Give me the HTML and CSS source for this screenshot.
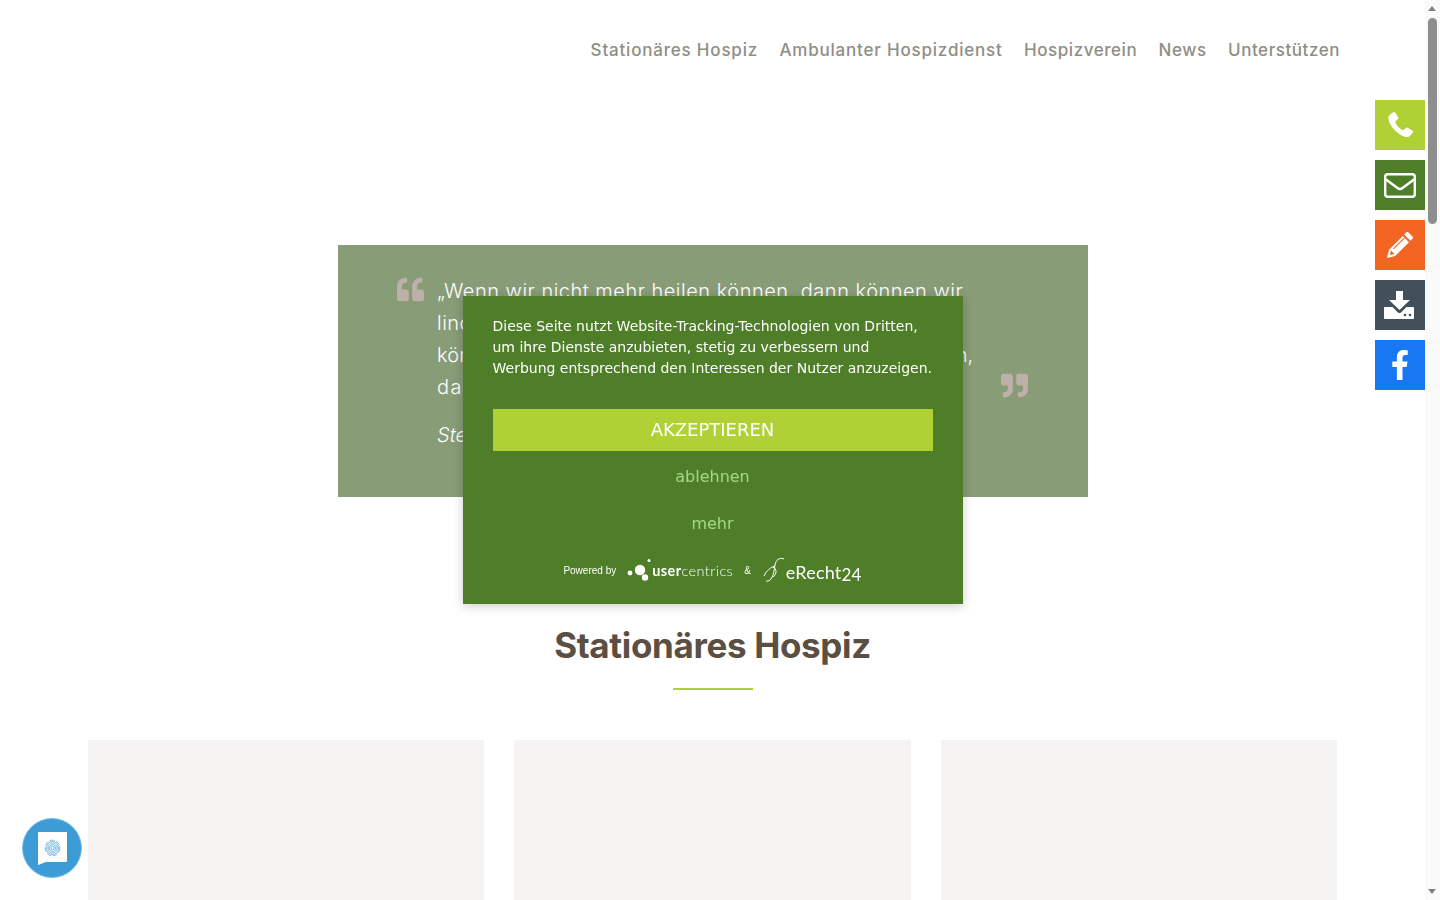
FILE: index.html
```html
<!DOCTYPE html>
<html lang="de">
<head>
    <meta charset="UTF-8">
    <meta name="viewport" content="width=device-width, initial-scale=1.0">
    <title>Hospiz</title>
    <link rel="stylesheet" href="styles.css">
</head>
<body>
    <div class="page">
        <header class="top">
            <nav class="menu">
                <a class="menu-wide" href="#">Stationäres Hospiz</a>
                <a class="menu-wide" href="#">Ambulanter Hospizdienst</a>
                <a href="#">Hospizverein</a>
                <a href="#">News</a>
                <a href="#">Unterstützen</a>
            </nav>
        </header>

        <section class="quote">
            <svg class="mark" viewBox="0 0 512 512"><path d="M464 256h-80v-64c0-35.3 28.7-64 64-64h8c13.3 0 24-10.7 24-24V56c0-13.3-10.7-24-24-24h-8c-88.4 0-160 71.6-160 160v240c0 26.5 21.5 48 48 48h128c26.5 0 48-21.5 48-48V304c0-26.5-21.5-48-48-48zm-288 0H96v-64c0-35.3 28.7-64 64-64h8c13.3 0 24-10.7 24-24V56c0-13.3-10.7-24-24-24h-8C71.6 32 0 103.6 0 192v240c0 26.5 21.5 48 48 48h128c26.5 0 48-21.5 48-48V304c0-26.5-21.5-48-48-48z"/></svg>
            <div class="quote-body">
                <p class="quote-text">„Wenn wir nicht mehr heilen können, dann können wir<br>lindern. Wenn wir nicht mehr lindern können, dann<br><span class="line-tight">können wir trösten. Wenn wir nicht mehr trösten können,</span><br><span class="line-wide">dann können wir da sein.“</span></p>
                <p class="quote-author">Ste</p>
            </div>
            <svg class="mark mark-end" viewBox="0 0 512 512"><path d="M464 32H336c-26.5 0-48 21.500-48 48v128c0 26.500 21.500 48 48 48h80v64c0 35.300-28.700 64-64 64h-8c-13.300 0-24 10.700-24 24v48c0 13.300 10.700 24 24 24h8c88.400 0 160-71.600 160-160V80c0-26.500-21.500-48-48-48zm-288 0H48C21.500 32 0 53.500 0 80v128c0 26.500 21.500 48 48 48h80v64c0 35.300-28.700 64-64 64h-8c-13.300 0-24 10.700-24 24v48c0 13.300 10.700 24 24 24h8c88.400 0 160-71.600 160-160V80c0-26.500-21.500-48-48-48z"/></svg>
        </section>

        <section class="offer">
            <h2 class="offer-title">Stationäres Hospiz</h2>
            <div class="offer-line"></div>
            <div class="cards">
                <div class="card"></div>
                <div class="card"></div>
                <div class="card"></div>
            </div>
        </section>
    </div>

    <aside class="side">
        <a class="side-btn lime" href="#">
            <svg class="phone" viewBox="2.300 1.100 19.900 20.200" width="25" height="25"><path fill="#fff" d="M6.600 1.300c.5-.3 1.100-.2 1.400.3l2.300 3.900c.3.500.2 1-.2 1.400L8.500 8.400c-.4.400-.5.900-.3 1.400.9 2 3 4.600 5.400 5.900.5.300 1 .2 1.400-.2l1.500-1.500c.4-.4 1-.5 1.500-.2l3.700 2.300c.5.300.7.900.4 1.400-.7 1.500-2 3.300-3.700 3.800-1.300.4-3.400-.1-5.800-1.600C8.300 17.400 4.800 13 3.400 9.800 2.500 7.700 2.300 6 2.700 4.800c.5-1.500 2.500-3 3.900-3.500z"/></svg>
        </a>
        <a class="side-btn green" href="#">
            <svg viewBox="0 0 32 25" width="32" height="25"><rect x="1.200" y="1.200" width="29.600" height="22.600" rx="2.500" fill="none" stroke="#fff" stroke-width="2.400"/><path d="M2 6.500l11.500 8.500c1.500 1.100 3.500 1.100 5 0L30 6.500" fill="none" stroke="#fff" stroke-width="2.400"/></svg>
        </a>
        <a class="side-btn orange" href="#">
            <svg viewBox="0 0 28 28" width="28" height="28"><path fill="#fff" d="M20.500 1.300c.5-.5 1.300-.5 1.800 0l4.400 4.400c.5.500.5 1.300 0 1.800l-2.300 2.300-6.200-6.200zM16.800 5l6.200 6.200L9.200 25 1 27l2-8.200z"/><path fill="#f26522" d="M5 19.500l3.500 3.500-3.800 1-.7-.7zM7 17.500L18 6.500l.8.800L7.800 18.300z"/></svg>
        </a>
        <a class="side-btn slate" href="#">
            <svg class="tray" viewBox="0 0 30 28" width="30" height="28"><path fill="#fff" d="M12 0h7v9h7L15.500 19 5 9h7z"/><path fill="#fff" d="M0 17c0-.6.400-1 1-1h7.500l5.500 5.500c.8.800 2.200.8 3 0L22.500 16H29c.6 0 1 .4 1 1v10c0 .6-.4 1-1 1H1c-.6 0-1-.4-1-1z"/><circle cx="21" cy="24" r="1.300" fill="#434f59"/><circle cx="26" cy="24" r="1.300" fill="#434f59"/></svg>
        </a>
        <a class="side-btn fb" href="#">
            <svg viewBox="0 0 320 512" width="18" height="30" preserveAspectRatio="none"><path fill="#fff" d="M279.140 288l14.220-92.660h-88.910v-60.130c0-25.350 12.420-50.060 52.240-50.060h40.420V6.260S260.430 0 225.360 0c-73.220 0-121.080 44.380-121.080 124.720v70.620H22.890V288h81.390v224h100.170V288z"/></svg>
        </a>
    </aside>

    <div class="consent">
        <p class="consent-text">Diese Seite nutzt Website-Tracking-Technologien von Dritten, um ihre Dienste anzubieten, stetig zu verbessern und Werbung entsprechend den Interessen der Nutzer anzuzeigen.</p>
        <button class="accept">AKZEPTIEREN</button>
        <a class="consent-link" href="#">ablehnen</a>
        <a class="consent-link" href="#">mehr</a>
        <div class="powered">
            <span class="powered-by">Powered by</span>
            <span class="uc">
                <svg viewBox="0 0 24 24" width="24" height="24"><circle cx="3" cy="15" r="2.400" fill="#fff"/><circle cx="13" cy="12" r="5.200" fill="#fff"/><circle cx="22" cy="2.500" r="1.500" fill="#fff"/><circle cx="18" cy="19.500" r="3.200" fill="#fff"/></svg>
                <span class="uc-name"><b>user</b>centrics</span>
            </span>
            <span class="powered-by">&amp;</span>
            <span class="er">
                <svg viewBox="0 0 24 26" width="24" height="26"><path d="M22 2c-5-2-8 1-9 6-1 5-1 10-4 14-1 1.500-3 2.500-5 2M13 9c-4 1-9 5-11 10M11 10c4 2 4 7 0 10" fill="none" stroke="#fff" stroke-width="1"/></svg>
                <span class="er-name">eRecht<small>24</small></span>
            </span>
        </div>
    </div>

    <a class="chat" href="#">
        <svg viewBox="0 0 29 33" width="29" height="33"><path fill="#fff" d="M1 0h27c.6 0 1 .4 1 1v28c0 .6-.4 1-1 1H8l-8 3V1c0-.6.400-1 1-1z"/><g fill="none" stroke="#5aaade" stroke-width=".8"><ellipse cx="14.500" cy="16" rx="1.500" ry="2"/><ellipse cx="14.500" cy="16" rx="3" ry="3.500"/><ellipse cx="14.500" cy="16" rx="4.500" ry="5"/><ellipse cx="14.500" cy="16" rx="6" ry="6.500"/><ellipse cx="14.500" cy="16" rx="7.300" ry="7.800" stroke-dasharray="5 1.500"/></g></svg>
    </a>

    <div class="scrollbar">
        <span class="arrow arrow-up"></span>
        <span class="thumb"></span>
        <span class="arrow arrow-down"></span>
    </div>
</body>
</html>
```

FILE: styles.css
```css
html, body {
    margin: 0;
    height: 100%;
    overflow: hidden;
    background-color: #fff;
}
.page {
    width: 1425px;
    font-family: "Inter", "Liberation Sans", sans-serif;
}
a {
    text-decoration: none;
}
p {
    margin: 0;
}

/* top menu */
.top {
    height: 100px;
    padding-right: 85px;
    display: flex;
    justify-content: flex-end;
    box-sizing: border-box;
}
.menu {
    display: flex;
    gap: 21.4px;
    padding-top: 39px;
    font-size: 17px;
    line-height: 22px;
    font-weight: 500;
    letter-spacing: 0.55px;
}
.menu a {
    color: #8e8e86;
}
.menu .menu-wide {
    letter-spacing: 0.8px;
}

/* quote */
.quote {
    width: 750px;
    height: 252px;
    box-sizing: border-box;
    margin: 145px 0 0 338px;
    padding: 30px 60px 0 59px;
    display: flex;
    background-color: #889c77;
    color: #fff;
}
.mark {
    width: 27px;
    height: 27px;
    margin-top: 1px;
    fill: #bdb0a8;
    flex: none;
}
.mark-end {
    margin-top: 97px;
    margin-left: auto;
}
.quote-body {
    margin-left: 13px;
}
.quote-text {
    font-size: 20px;
    line-height: 32px;
    font-weight: 300;
    letter-spacing: 0.5px;
    white-space: nowrap;
}
.line-tight {
    letter-spacing: 0.2px;
}
.line-wide {
    letter-spacing: 1.5px;
}
.quote-author {
    margin-top: 16px;
    font-size: 20px;
    line-height: 32px;
    font-weight: 300;
    font-style: italic;
}

/* section under the quote */
.offer {
    padding-top: 125px;
}
.offer-title {
    margin: 0;
    text-align: center;
    font-size: 35px;
    line-height: 46px;
    font-weight: 650;
    letter-spacing: -0.35px;
    color: #5b4e42;
}
.offer-line {
    width: 80px;
    height: 2px;
    margin: 20px auto 0;
    background-color: #b0d135;
}
.cards {
    display: grid;
    grid-template-columns: repeat(3, 1fr);
    gap: 30px;
    width: 1249px;
    margin: 50px 0 0 88px;
}
.card {
    height: 400px;
    background-color: #f6f4f3;
}

/* fixed buttons on the right */
.side {
    position: fixed;
    top: 100px;
    left: 1375px;
    display: flex;
    flex-direction: column;
    gap: 10px;
}
.side-btn {
    width: 50px;
    height: 50px;
    display: flex;
    align-items: center;
    justify-content: center;
}
.phone {
    margin-bottom: 2px;
}
.tray {
    margin-right: 2px;
}
.lime { background-color: #b0d135; }
.green { background-color: #4e7f28; }
.orange { background-color: #f26522; }
.slate { background-color: #434f59; }
.fb { background-color: #1877f2; }

/* cookie banner */
.consent {
    position: fixed;
    top: 296px;
    left: 462.5px;
    width: 500px;
    height: 308px;
    box-sizing: border-box;
    padding: 20px 30px 0;
    background-color: #4e7f28;
    box-shadow: 0 2px 10px rgba(0, 0, 0, 0.2);
    font-family: "DejaVu Sans", sans-serif;
    color: #fff;
}
.consent-text {
    font-size: 14px;
    line-height: 21px;
}
.accept {
    display: block;
    width: 440px;
    height: 42px;
    margin-top: 30px;
    padding: 0 0 2px;
    border: 0;
    background-color: #b0d135;
    color: #fff;
    font-family: inherit;
    font-size: 18px;
}
.consent-link {
    display: block;
    margin-top: 15px;
    height: 32px;
    line-height: 22px;
    text-align: center;
    font-size: 16px;
    color: #a6d68c;
}
.powered {
    display: flex;
    align-items: center;
    justify-content: center;
    gap: 11px;
    margin-top: 12px;
}
.powered-by {
    font-family: "Liberation Sans", sans-serif;
    font-size: 10px;
}
.uc, .er {
    display: flex;
    align-items: center;
}
.uc-name {
    margin-left: 1px;
    font-family: "Lato", sans-serif;
    font-size: 14.5px;
    letter-spacing: 0.4px;
    font-weight: 300;
}
.uc-name b {
    font-weight: 700;
}
.er-name {
    font-family: "Lato", sans-serif;
    font-size: 18px;
    font-weight: 400;
    letter-spacing: 0.2px;
    margin-top: 3px;
}
.er-name small {
    font-size: 17px;
    position: relative;
    top: 2px;
}

/* chat bubble */
.chat {
    position: fixed;
    left: 22px;
    top: 818px;
    width: 60px;
    height: 60px;
    box-sizing: border-box;
    border-radius: 50%;
    border: 1px solid #7fc0e8;
    background-color: #3d9bd6;
    display: flex;
    align-items: center;
    justify-content: center;
}

/* scrollbar drawn by hand */
.scrollbar {
    position: fixed;
    top: 0;
    right: 0;
    width: 15px;
    height: 900px;
    background-color: #fafafa;
}
.thumb {
    position: absolute;
    top: 18px;
    left: 3px;
    width: 9px;
    height: 206px;
    border-radius: 5px;
    background-color: #8e8e8e;
}
.arrow {
    position: absolute;
    left: 3px;
    width: 0;
    height: 0;
    border-left: 4.5px solid transparent;
    border-right: 4.5px solid transparent;
}
.arrow-up {
    top: 6px;
    border-bottom: 5px solid #808080;
}
.arrow-down {
    bottom: 6px;
    border-top: 5px solid #808080;
}
```
